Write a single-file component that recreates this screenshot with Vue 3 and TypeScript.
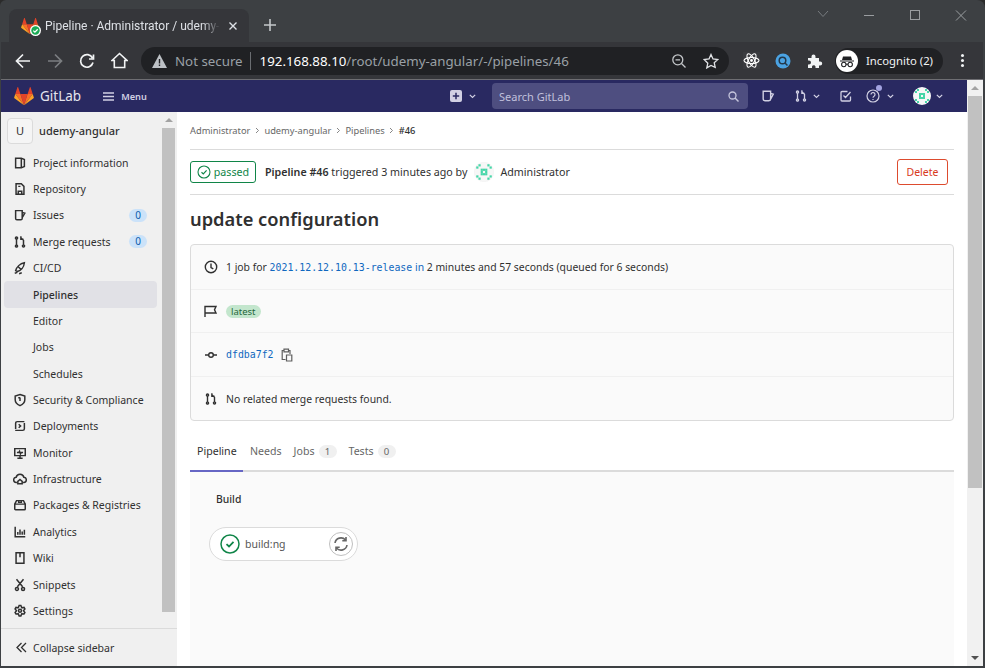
<script setup lang="ts">
interface NavItem {
  label: string
  icon?: string
  count?: number
  active?: boolean
}

const navItems: NavItem[] = [
  { label: 'Project information', icon: 'M3 2.500h6.500l3.500 1.500v8l-3.500 1.500H3zM9.500 2.500v11' },
  { label: 'Repository', icon: 'M3.500 2h6l3 3v9h-9zM6 14v-3.500h4V14M6 5h2.500' },
  { label: 'Issues', icon: 'M3 3h7.500v9a1.500 1.500 0 0 1-1.500 1.500H4.500A1.500 1.500 0 0 1 3 12zM10.500 5l3 1-3 5', count: 0 },
  { label: 'Merge requests', icon: 'M4 5v6M2.800 3.500a1.200 1.200 0 1 0 2.400 0 1.200 1.200 0 1 0-2.400 0M2.800 12.500a1.200 1.200 0 1 0 2.400 0 1.200 1.200 0 1 0-2.400 0M10.800 12.500a1.200 1.200 0 1 0 2.400 0 1.200 1.200 0 1 0-2.400 0M12 11V6L9 3.200M9 1.500v3.400h3', count: 0 },
  { label: 'CI/CD', icon: 'M3 11c1-4 5-8 10-9-.5 5-4 9-8 10zM6 6.500l3.500 3.500M2 14l3-1M7 14.500l3-1' },
  { label: 'Pipelines', active: true },
  { label: 'Editor' },
  { label: 'Jobs' },
  { label: 'Schedules' },
  { label: 'Security & Compliance', icon: 'M8 1.800l5.500 1.700v4.200c0 3-2.400 5.400-5.500 6.800-3.100-1.400-5.500-3.800-5.500-6.800V3.500zM8 5v4M6 5.500h2' },
  { label: 'Deployments', icon: 'M3 11.500V5a2 2 0 0 1 2-2h8M13 4.500V11a2 2 0 0 1-2 2H2.500M6.500 6l2.200 2-2.200 2' },
  { label: 'Monitor', icon: 'M2 3h12v8H2zM5 14h6M8 11v3M4.500 7.500h2l1-1.500 1 3 1-1.500h2' },
  { label: 'Infrastructure', icon: 'M4.500 12H4a3 3 0 0 1-.4-6 4.500 4.500 0 0 1 8.800 0 3 3 0 0 1-.4 6h-.5M8 8.500l2.500 2.200v2.600H5.500v-2.600z' },
  { label: 'Packages & Registries', icon: 'M2 7h12v5.500a1 1 0 0 1-1 1H3a1 1 0 0 1-1-1zM2 7l2-4h8l2 4M6.500 3v2h3V3' },
  { label: 'Analytics', icon: 'M2.500 2v11.500H14M5.500 11V8M8 11V5M10.500 11V7.500M13 11V5.500' },
  { label: 'Wiki', icon: 'M3.500 2h9v12h-9zM8 2v5' },
  { label: 'Snippets', icon: 'M4 1.500l7 8.500M12 1.500L5 10M2.800 12.500a1.700 1.700 0 1 0 3.400 0 1.700 1.700 0 1 0-3.400 0M9.800 12.500a1.700 1.700 0 1 0 3.400 0 1.700 1.700 0 1 0-3.400 0' },
  { label: 'Settings', icon: 'M6 4.300L7 1.800h2l1 2.500 2.600-.4 1 1.700L12 7.700l1.600 2.100-1 1.700-2.600-.4-1 2.500H7l-1-2.500-2.600.4-1-1.700L4 7.700 2.400 5.600l1-1.700zM6.300 7.700a1.700 1.700 0 1 0 3.400 0 1.700 1.700 0 1 0-3.400 0' },
]

const mrIcon = navItems[3].icon
const crumbs = ['Administrator', 'udemy-angular', 'Pipelines']

// identicon cells as rows of on/off, same pattern on every avatar
const identicon = ['.........', '..x...x..', '.x.....x.', '...xxx...', '...x.x...', '...xxx...', '.x.....x.', '..x...x..', '.........']
  .flatMap((row, y) => [...row].map((ch, x) => (ch === 'x' ? [x, y] : null)))
  .filter((c): c is number[] => c !== null)
</script>

<template>
  <div class="window">
    <!-- Browser tab strip -->
    <div class="tabstrip">
      <div class="tab">
        <span class="favicon">
          <svg width="18" height="18" viewBox="0 0 25 24">
            <path d="M12.500 23.500L17 9.600H8z" fill="#e24329" />
            <path d="M12.500 23.500L8 9.600H1.600zM12.500 23.500L17 9.600h6.400z" fill="#fc6d26" />
            <path d="M1.600 9.600L.2 13.800a1 1 0 0 0 .35 1.100L12.500 23.500zM23.400 9.600l1.400 4.200a1 1 0 0 1-.35 1.100L12.500 23.500z" fill="#fca326" />
            <path d="M1.600 9.600H8L5.200 1a.5.5 0 0 0-.9 0zM23.400 9.600H17L19.800 1a.5.5 0 0 1 .9 0z" fill="#e24329" />
          </svg>
          <svg class="favicon-check" width="11" height="11" viewBox="0 0 11 11">
            <circle cx="5.500" cy="5.500" r="5.500" fill="#fff" />
            <circle cx="5.500" cy="5.500" r="4.200" fill="#1aaa55" />
            <path d="M3.300 5.600l1.600 1.500 2.800-2.900" fill="none" stroke="#fff" stroke-width="1.300" />
          </svg>
        </span>
        <span class="tab-title">Pipeline · Administrator / udemy-</span>
        <svg class="tab-close" width="10" height="10" viewBox="0 0 10 10">
          <path d="M1.500 1.500l7 7M8.500 1.500l-7 7" stroke="#dee1e6" stroke-width="1.400" />
        </svg>
      </div>
      <svg class="tab-new" width="14" height="14" viewBox="0 0 14 14">
        <path d="M7 1v12M1 7h12" stroke="#c4c7ca" stroke-width="1.600" />
      </svg>
      <div class="grow"></div>
      <div class="win-controls">
        <svg width="46" height="14" viewBox="0 0 46 14"><path d="M18 3l5 5.500L28 3" fill="none" stroke="#777b7f" /></svg>
        <svg width="46" height="14" viewBox="0 0 46 14"><path d="M18 7.500h10" stroke="#9a9da0" /></svg>
        <svg width="46" height="14" viewBox="0 0 46 14"><rect x="18.500" y="2.500" width="9" height="9" fill="none" stroke="#9a9da0" /></svg>
        <svg width="46" height="14" viewBox="0 0 46 14"><path d="M18 2.500l10 10M28 2.500l-10 10" stroke="#9a9da0" /></svg>
      </div>
    </div>

    <!-- Browser toolbar -->
    <div class="toolbar">
      <div class="tool-btn">
        <svg width="16" height="16" viewBox="0 0 16 16"><path d="M15 8H2M8 1.500L1.500 8 8 14.500" fill="none" stroke="#f1f3f4" stroke-width="1.700" /></svg>
      </div>
      <div class="tool-btn">
        <svg width="16" height="16" viewBox="0 0 16 16"><path d="M1 8h13M8 1.500L14.500 8 8 14.500" fill="none" stroke="#7b7e81" stroke-width="1.700" /></svg>
      </div>
      <div class="tool-btn">
        <svg width="16" height="16" viewBox="0 0 16 16"><path d="M13.500 5A6.300 6.300 0 1 0 14 9.500M14.500 1.500V6H10" fill="none" stroke="#f1f3f4" stroke-width="1.700" /></svg>
      </div>
      <div class="tool-btn">
        <svg width="17" height="17" viewBox="0 0 17 17"><path d="M1 8.500L8.500 1.500l7.500 7h-2.300v7H3.300v-7z" fill="none" stroke="#f1f3f4" stroke-width="1.600" /></svg>
      </div>
      <div class="omnibox">
        <svg width="15" height="14" viewBox="0 0 15 14"><path d="M7.500 0L15 14H0z" fill="#bdc1c6" /><path d="M7.500 5v4.500M7.500 10.500v1.500" stroke="#202124" stroke-width="1.400" /></svg>
        <span class="not-secure">Not secure</span>
        <span class="omni-sep"></span>
        <span class="url"><b>192.168.88.10</b>/root/udemy-angular/-/pipelines/46</span>
        <div class="grow"></div>
        <svg class="omni-icon" width="16" height="16" viewBox="0 0 16 16"><circle cx="6.800" cy="6.800" r="5" fill="none" stroke="#c4c7ca" stroke-width="1.300" /><path d="M4.500 6.800h4.600M10.500 10.500l4 4" stroke="#c4c7ca" stroke-width="1.300" /></svg>
        <svg class="omni-icon star" width="16" height="16" viewBox="0 0 16 16"><path d="M8 1.500l2 4.500 4.800.5-3.600 3.200 1 4.700L8 12.500l-4.200 2.400 1-4.700L1.200 6.500 6 6z" fill="none" stroke="#e0e2e5" stroke-width="1.300" /></svg>
      </div>
      <div class="ext">
        <svg width="17" height="17" viewBox="0 0 17 17">
          <rect width="17" height="17" fill="#3a3b3f" />
          <g fill="none" stroke="#fff" stroke-width="1.100">
            <ellipse cx="8.500" cy="8.500" rx="7.500" ry="3" />
            <ellipse cx="8.500" cy="8.500" rx="7.500" ry="3" transform="rotate(60 8.500 8.500)" />
            <ellipse cx="8.500" cy="8.500" rx="7.500" ry="3" transform="rotate(120 8.500 8.500)" />
          </g>
          <circle cx="8.500" cy="8.500" r="1.400" fill="#fff" />
        </svg>
      </div>
      <div class="ext">
        <svg width="16" height="16" viewBox="0 0 16 16">
          <circle cx="8" cy="8" r="7.500" fill="#4ba3e3" />
          <circle cx="7.500" cy="7.500" r="3.300" fill="none" stroke="#23394c" stroke-width="1.500" />
          <path d="M10 10l2.500 2.500" stroke="#23394c" stroke-width="1.500" />
        </svg>
      </div>
      <div class="ext">
        <svg width="16" height="16" viewBox="0 0 16 16">
          <path d="M1 5h3.500V3.500a2 2 0 0 1 4 0V5H12v3.500h1.200a2 2 0 0 1 0 4H12V15H8.500v-1.400a1.800 1.800 0 0 0-3.500 0V15H1v-3.500h1a2 2 0 0 0 0-4H1z" fill="#f1f3f4" />
        </svg>
      </div>
      <div class="incognito">
        <svg width="22" height="22" viewBox="0 0 22 22">
          <circle cx="11" cy="11" r="11" fill="#fff" />
          <path d="M7 6.500h8l1 3.500H6zM4 10.500h14v1H4z" fill="#202124" />
          <g fill="none" stroke="#202124" stroke-width="1.100"><circle cx="7.800" cy="14.500" r="2.200" /><circle cx="14.200" cy="14.500" r="2.200" /><path d="M10 14.300h2" /></g>
        </svg>
        <span>Incognito (2)</span>
      </div>
      <div class="kebab"><i></i><i></i><i></i></div>
    </div>

    <div class="page">
      <div class="page-body">
        <!-- GitLab top bar -->
        <header class="navbar">
          <svg class="logo" width="20" height="20" viewBox="0 0 25 24">
            <path d="M12.500 23.500L17 9.600H8z" fill="#e24329" />
            <path d="M12.500 23.500L8 9.600H1.600zM12.500 23.500L17 9.600h6.400z" fill="#fc6d26" />
            <path d="M1.600 9.600L.2 13.800a1 1 0 0 0 .35 1.100L12.500 23.500zM23.400 9.600l1.400 4.200a1 1 0 0 1-.35 1.100L12.500 23.500z" fill="#fca326" />
            <path d="M1.600 9.600H8L5.200 1a.5.5 0 0 0-.9 0zM23.400 9.600H17L19.800 1a.5.5 0 0 1 .9 0z" fill="#e24329" />
          </svg>
          <span class="brand">GitLab</span>
          <svg class="burger" width="11" height="9" viewBox="0 0 11 9"><path d="M0 1h11M0 4.500h11M0 8h11" stroke="#d1d0e3" stroke-width="1.300" /></svg>
          <span class="menu">Menu</span>
          <div class="grow"></div>
          <svg width="12" height="12" viewBox="0 0 12 12"><rect width="12" height="12" rx="2" fill="#d1d0e3" /><path d="M6 2.800v6.400M2.800 6h6.400" stroke="#292961" stroke-width="1.500" /></svg>
          <svg class="chev plus-chev" width="7" height="5" viewBox="0 0 7 5"><path d="M.8.800L3.500 3.500 6.200.8" fill="none" stroke="#d1d0e3" stroke-width="1.200" /></svg>
          <div class="search">
            <span>Search GitLab</span>
            <svg width="11" height="11" viewBox="0 0 11 11"><circle cx="4.500" cy="4.500" r="3.500" fill="none" stroke="#c6c6dc" stroke-width="1.300" /><path d="M7 7l3.500 3.500" stroke="#c6c6dc" stroke-width="1.400" /></svg>
          </div>
          <svg class="nav-icon issue-nav" width="14" height="14" viewBox="0 0 16 16"><path d="M2.500 2.500h8.500v9a2 2 0 0 1-2 2H4.500a2 2 0 0 1-2-2zM11 5l3 1-3 5.500" fill="none" stroke="#d1d0e3" stroke-width="1.600" /></svg>
          <svg class="nav-icon mr-nav" width="14" height="14" viewBox="0 0 16 16"><path :d="mrIcon" fill="none" stroke="#d1d0e3" stroke-width="1.500" /></svg>
          <svg class="chev mr-chev" width="7" height="5" viewBox="0 0 7 5"><path d="M.8.800L3.500 3.500 6.200.8" fill="none" stroke="#d1d0e3" stroke-width="1.200" /></svg>
          <svg class="nav-icon todo-nav" width="12" height="12" viewBox="0 0 12 12"><path d="M10.500 6.500V10a1 1 0 0 1-1 1H2a1 1 0 0 1-1-1V2.500a1 1 0 0 1 1-1h5.500M3.500 5.500L5.500 7.500 10.500 2" fill="none" stroke="#d1d0e3" stroke-width="1.300" /></svg>
          <span class="help-wrap">
            <svg width="14" height="14" viewBox="0 0 14 14"><circle cx="7" cy="7" r="6" fill="none" stroke="#d1d0e3" stroke-width="1.200" /><path d="M5 5.500a2 2 0 1 1 3 1.800c-.7.4-1 .8-1 1.500M7 10v1" fill="none" stroke="#d1d0e3" stroke-width="1.200" /></svg>
            <i class="help-dot"></i>
          </span>
          <svg class="chev help-chev" width="7" height="5" viewBox="0 0 7 5"><path d="M.8.800L3.500 3.500 6.200.8" fill="none" stroke="#d1d0e3" stroke-width="1.200" /></svg>
          <svg class="nav-avatar" width="18" height="18" viewBox="0 0 9 9">
            <circle cx="4.500" cy="4.500" r="4.500" fill="#f7f7f7" />
            <rect v-for="c in identicon" :key="c.join()" :x="c[0]" :y="c[1]" width="1" height="1" fill="#45d6a8" />
          </svg>
          <svg class="chev avatar-chev" width="7" height="5" viewBox="0 0 7 5"><path d="M.8.800L3.500 3.500 6.200.8" fill="none" stroke="#d1d0e3" stroke-width="1.200" /></svg>
        </header>

        <div class="layout">
          <!-- Sidebar -->
          <aside class="sidebar">
            <div class="side-top">
              <div class="side-scroll">
                <div class="project">
                  <span class="project-avatar">U</span>
                  <span class="project-name">udemy-angular</span>
                </div>
                <a v-for="item in navItems" :key="item.label" class="nav-item" :class="{ active: item.active }">
                  <span class="nav-ico">
                    <svg v-if="item.icon" width="14" height="14" viewBox="0 0 16 16"><path :d="item.icon" fill="none" stroke="#303030" stroke-width="1.700" /></svg>
                  </span>
                  <span class="nav-label">{{ item.label }}</span>
                  <span v-if="item.count !== undefined" class="nav-count">{{ item.count }}</span>
                </a>
              </div>
              <div class="side-bar">
                <span class="arrow-up"></span>
                <span class="thumb"></span>
              </div>
            </div>
            <div class="collapse">
              <svg width="11" height="11" viewBox="0 0 11 11"><path d="M5.500 1L1 5.500 5.500 10M10 1L5.500 5.500 10 10" fill="none" stroke="#303030" stroke-width="1.300" /></svg>
              <span>Collapse sidebar</span>
            </div>
          </aside>

          <!-- Main content -->
          <main class="content">
            <nav class="breadcrumbs">
              <template v-for="c in crumbs" :key="c">
                <span>{{ c }}</span>
                <svg width="5" height="7" viewBox="0 0 5 7"><path d="M1 1l2.500 2.500L1 6" fill="none" stroke="#868686" /></svg>
              </template>
              <span class="crumb-last">#46</span>
            </nav>

            <div class="pipe-header">
              <span class="ci-badge">
                <svg width="14" height="14" viewBox="0 0 14 14"><circle cx="7" cy="7" r="6" fill="none" stroke="#108548" stroke-width="1.100" /><path d="M4.500 7.200l1.800 1.700 3.300-3.500" fill="none" stroke="#108548" stroke-width="1.200" /></svg>
                passed
              </span>
              <span class="pipe-text"><strong>Pipeline #46</strong> triggered 3 minutes ago by</span>
              <svg class="pipe-avatar" width="20" height="20" viewBox="0 0 9 9">
                <circle cx="4.500" cy="4.500" r="4.400" fill="#f7f7f7" stroke="#ececec" stroke-width=".2" />
                <rect v-for="c in identicon" :key="c.join()" :x="c[0]" :y="c[1]" width="1" height="1" fill="#45d6a8" />
              </svg>
              <span class="pipe-user">Administrator</span>
              <div class="grow"></div>
              <button class="delete-btn">Delete</button>
            </div>

            <h1 class="title">update configuration</h1>

            <section class="info-card">
              <div class="info-row">
                <svg width="14" height="14" viewBox="0 0 14 14"><circle cx="7" cy="7" r="5.700" fill="none" stroke="#303030" stroke-width="1.400" /><path d="M7 3.500V7.500l2.300 1.300" fill="none" stroke="#303030" stroke-width="1.400" /></svg>
                <span>1 job for <a class="mono">2021.12.12.10.13-release</a> <a class="link">in</a> 2 minutes and 57 seconds (queued for 6 seconds)</span>
              </div>
              <div class="info-row">
                <svg width="14" height="14" viewBox="0 0 14 14"><path d="M1 13V2.500h11L10.500 5.800 12 9H1" fill="none" stroke="#303030" stroke-width="1.400" /></svg>
                <span class="tag">latest</span>
              </div>
              <div class="info-row">
                <svg width="14" height="14" viewBox="0 0 14 14"><circle cx="7" cy="7" r="2.300" fill="none" stroke="#303030" stroke-width="1.400" /><path d="M1 7h3.700M9.300 7H13" stroke="#303030" stroke-width="1.400" /></svg>
                <a class="mono">dfdba7f2</a>
                <svg class="copy" width="12" height="14" viewBox="0 0 12 14"><path d="M3 2.500H1.200v9H4.500M7.500 2.500H9V6M3 1.200h4.500v2.600H3zM5.500 7h5.300v6H5.500z" fill="none" stroke="#5e5e5e" stroke-width="1.200" /></svg>
              </div>
              <div class="info-row">
                <svg width="14" height="14" viewBox="0 0 16 16"><path :d="mrIcon" fill="none" stroke="#303030" stroke-width="1.600" /></svg>
                <span>No related merge requests found.</span>
              </div>
            </section>

            <div class="tabs">
              <a class="tab-link selected">Pipeline</a>
              <a class="tab-link needs">Needs</a>
              <a class="tab-link">Jobs<span class="tab-count">1</span></a>
              <a class="tab-link">Tests<span class="tab-count">0</span></a>
            </div>

            <section class="graph">
              <div class="stage-name">Build</div>
              <div class="job-pill">
                <svg width="20" height="20" viewBox="0 0 20 20"><circle cx="10" cy="10" r="9" fill="#fff" stroke="#108548" stroke-width="1.500" /><path d="M6.500 10.200l2.500 2.300 4.500-4.700" fill="none" stroke="#108548" stroke-width="1.800" /></svg>
                <span class="job-name">build:ng</span>
                <span class="retry">
                  <svg width="16" height="16" viewBox="0 0 16 16"><path d="M2 7a6 6 0 0 1 10.500-3M14 9a6 6 0 0 1-10.500 3M13 1v3.700H9.300M3 15v-3.700h3.700" fill="none" stroke="#666" stroke-width="1.600" /></svg>
                </span>
              </div>
            </section>
          </main>
        </div>
      </div>

      <!-- Page scrollbar -->
      <div class="page-bar">
        <span class="arrow-up"></span>
        <span class="page-thumb"></span>
        <div class="grow"></div>
        <span class="arrow-down"></span>
      </div>
    </div>
  </div>
</template>

<style>
html, body {
  margin: 0;
  overflow: hidden;
  background: #2b2b2b;
}
</style>

<style scoped>
.window {
  width: 985px;
  height: 668px;
  display: flex;
  flex-direction: column;
  box-sizing: border-box;
  padding: 0 2px 2px 1px;
  background: #3d4043;
  border-radius: 6px 8px 0 0;
  font-family: "Noto Sans", "Open Sans", sans-serif;
  color: #303030;
  overflow: hidden;
}

.grow {
  flex: 1;
}

/* browser chrome */
.tabstrip {
  height: 42px;
  display: flex;
  align-items: flex-end;
  flex: none;
}

.tab {
  width: 240px;
  height: 33px;
  margin-left: 8px;
  padding: 0 10px 0 12px;
  box-sizing: border-box;
  display: flex;
  align-items: center;
  background: #35363a;
  border-radius: 8px 8px 0 0;
  color: #dee1e6;
  font-family: Roboto, "Noto Sans", sans-serif;
  font-size: 12px;
}

.favicon {
  position: relative;
  width: 18px;
  height: 18px;
  flex: none;
  margin-right: 6px;
}

.favicon-check {
  position: absolute;
  right: -2px;
  bottom: -1px;
}

.tab-title {
  width: 175px;
  white-space: nowrap;
  flex: none;
  -webkit-mask-image: linear-gradient(90deg, #000 90%, transparent);
  mask-image: linear-gradient(90deg, #000 90%, transparent);
}

.tab-close {
  margin-left: 8px;
  flex: none;
}

.tab-new {
  margin: 0 0 10px 14px;
}

.win-controls {
  display: flex;
  align-self: flex-start;
  padding-top: 8px;
  margin-right: -1px;
}

.toolbar {
  height: 37px;
  flex: none;
  display: flex;
  align-items: center;
  background: #35363a;
  padding-left: 6px;
  border-bottom: 1px solid #6e6e72;
}

.tool-btn {
  width: 32px;
  display: flex;
  justify-content: center;
}

.omnibox {
  width: 588px;
  height: 28px;
  margin: 0 6px;
  padding: 0 10px 0 11px;
  box-sizing: border-box;
  display: flex;
  align-items: center;
  background: #202124;
  border-radius: 14px;
  font-size: 13.300px;
}

.not-secure {
  margin-left: 8px;
  color: #9aa0a6;
}

.omni-sep {
  width: 1px;
  height: 18px;
  margin: 0 9px 0 7px;
  background: #6a6d71;
}

.url {
  color: #9aa0a6;
  white-space: nowrap;
}

.url b {
  color: #fff;
  font-weight: 400;
}

.omni-icon.star {
  margin-left: 16px;
}

.ext {
  width: 32px;
  display: flex;
  justify-content: center;
}

.incognito {
  width: 108px;
  height: 26px;
  margin-left: 4px;
  padding-left: 1px;
  box-sizing: border-box;
  display: flex;
  align-items: center;
  gap: 8px;
  border-radius: 13px;
  background: #202124;
  color: #f1f3f4;
  font-size: 11.300px;
  white-space: nowrap;
}

.kebab {
  display: flex;
  flex-direction: column;
  gap: 2px;
  margin-left: 18px;
}

.kebab i {
  width: 3px;
  height: 3px;
  border-radius: 50%;
  background: #f1f3f4;
}

/* page */
.page {
  flex: 1;
  min-height: 0;
  display: flex;
}

.page-body {
  flex: 1;
  min-width: 0;
  display: flex;
  flex-direction: column;
  background: #fff;
}

.page-bar {
  width: 16px;
  flex: none;
  display: flex;
  flex-direction: column;
  align-items: center;
  background: #f1f1f1;
}

.page-thumb {
  width: 14px;
  height: 392px;
  background: #c1c1c1;
}

.arrow-up,
.arrow-down {
  width: 0;
  height: 0;
  flex: none;
  border-left: 4px solid transparent;
  border-right: 4px solid transparent;
}

.arrow-up {
  margin: 6px 0 6px;
  border-bottom: 4px solid #a3a3a3;
}

.arrow-down {
  margin: 6px 0;
  border-top: 4px solid #505050;
}

/* gitlab navbar */
.navbar {
  height: 32px;
  flex: none;
  display: flex;
  align-items: center;
  padding: 0 24px 0 13px;
  box-sizing: border-box;
  background: #292961;
  color: #d1d0e3;
}

.brand {
  margin-left: 6px;
  font-size: 13.500px;
  color: #e4e4ee;
}

.burger {
  margin-left: 22px;
}

.menu {
  margin-left: 7px;
  font-size: 9.200px;
  font-weight: 600;
}

.chev {
  margin-left: 4px;
  flex: none;
}

.plus-chev {
  margin-left: 7px;
}

.mr-chev {
  margin-left: 5px;
}

.help-chev {
  margin-left: 7px;
}

.avatar-chev {
  margin-left: 5px;
}

.search {
  width: 256px;
  height: 26px;
  margin-left: 16px;
  padding: 0 9px 0 7px;
  box-sizing: border-box;
  display: flex;
  align-items: center;
  justify-content: space-between;
  background: #4e4e80;
  border-radius: 4px;
  color: #c0c0dc;
  font-size: 11px;
}

.issue-nav {
  margin-left: 13px;
}

.mr-nav {
  margin-left: 19px;
}

.todo-nav {
  margin-left: 20px;
}

.help-wrap {
  position: relative;
  display: flex;
  margin-left: 14px;
}

.help-dot {
  position: absolute;
  right: -2px;
  top: -4px;
  width: 6px;
  height: 6px;
  border-radius: 50%;
  background: #a3a3e0;
}

.nav-avatar {
  margin-left: 19px;
}

/* sidebar */
.layout {
  flex: 1;
  min-height: 0;
  display: flex;
}

.sidebar {
  width: 176px;
  flex: none;
  display: flex;
  flex-direction: column;
  background: #f0f0f0;
}

.side-top {
  flex: 1;
  min-height: 0;
  display: flex;
}

.side-scroll {
  width: 161px;
  flex: none;
  padding: 6px 5px 0 3px;
  box-sizing: border-box;
}

.side-bar {
  width: 14px;
  flex: none;
  display: flex;
  flex-direction: column;
  align-items: center;
}

.thumb {
  width: 13px;
  height: 484px;
  margin-right: 1px;
  background: #c1c1c1;
}

.project {
  height: 26px;
  display: flex;
  align-items: center;
  margin: 0 0 5.600px 3px;
  gap: 6px;
}

.project-avatar {
  width: 26px;
  height: 26px;
  box-sizing: border-box;
  display: flex;
  align-items: center;
  justify-content: center;
  padding-bottom: 1px;
  border: 1px solid #dbdbdb;
  border-radius: 4px;
  background: #f5f5f5;
  font-size: 11px;
}

.project-name {
  padding-bottom: 2px;
  font-size: 11px;
  font-weight: 500;
}

.nav-item {
  height: 26.360px;
  display: flex;
  align-items: center;
  padding-left: 9px;
  border-radius: 4px;
  font-size: 10.500px;
  box-sizing: border-box;
}

.nav-item.active {
  background: #e1e1e6;
  font-weight: 500;
}

.nav-ico {
  width: 14px;
  height: 14px;
  flex: none;
  margin-right: 6px;
  display: flex;
}

.nav-label {
  flex: 1;
  white-space: nowrap;
}

.nav-count {
  width: 18px;
  height: 13px;
  margin-right: 10px;
  border-radius: 7px;
  background: #cbe2f9;
  color: #0b5cad;
  font-size: 10px;
  line-height: 13px;
  text-align: center;
}

.collapse {
  height: 37px;
  flex: none;
  display: flex;
  align-items: center;
  gap: 6px;
  padding-left: 15px;
  border-top: 1px solid #dbdbdb;
  font-size: 10.500px;
}

/* main */
.content {
  flex: 1;
  min-width: 0;
  display: flex;
  flex-direction: column;
  padding: 0 13px;
  background: #fff;
}

.breadcrumbs {
  height: 37px;
  flex: none;
  display: flex;
  align-items: center;
  gap: 4.500px;
  border-bottom: 1px solid #dbdbdb;
  font-size: 9.300px;
  color: #666;
}

.crumb-last {
  color: #303030;
  font-weight: 500;
}

.pipe-header {
  height: 44px;
  flex: none;
  display: flex;
  align-items: center;
  border-bottom: 1px solid #dbdbdb;
  font-size: 10.700px;
}

.ci-badge {
  width: 66px;
  height: 22px;
  box-sizing: border-box;
  display: flex;
  align-items: center;
  justify-content: center;
  gap: 3px;
  border: 1px solid #108548;
  border-radius: 3px;
  color: #108548;
}

.pipe-text {
  margin-left: 9px;
}

.pipe-text strong {
  font-weight: 600;
}

.pipe-avatar {
  margin-left: 7px;
}

.pipe-user {
  margin-left: 6px;
}

.delete-btn {
  width: 51px;
  height: 26px;
  margin-right: 6px;
  padding: 0;
  border: 1px solid #dd4b2e;
  border-radius: 3px;
  background: #fff;
  color: #d83a1c;
  font: inherit;
  font-size: 10.500px;
}

.title {
  height: 49px;
  margin: 0;
  flex: none;
  font-size: 18.300px;
  font-weight: 600;
  line-height: 47px;
}

.info-card {
  height: 177px;
  flex: none;
  box-sizing: border-box;
  display: grid;
  grid-template-rows: 45px 43px 44px 43px;
  background: #fafafa;
  border: 1px solid #dbdbdb;
  border-radius: 4px;
  font-size: 10.400px;
}

.info-row {
  display: flex;
  align-items: center;
  gap: 8px;
  padding-left: 13px;
  border-bottom: 1px solid #f0f0f0;
}

.info-row:last-child {
  border-bottom: none;
}

.mono {
  font-family: "DejaVu Sans Mono", "Liberation Mono", monospace;
  font-size: 9.900px;
  color: #1068bf;
}

.link {
  color: #1068bf;
}

.tag {
  padding: 0 5px;
  height: 13px;
  border-radius: 7px;
  background: #c3e6cd;
  color: #24663b;
  font-size: 9.500px;
  line-height: 13px;
}

.copy {
  margin-left: -1px;
}

.tabs {
  height: 51px;
  flex: none;
  box-sizing: border-box;
  display: flex;
  align-items: flex-end;
  border-bottom: 2px solid #dbdbdb;
  font-size: 10.600px;
  color: #666;
}

.tab-link {
  display: flex;
  align-items: center;
  height: 30px;
  margin-bottom: -2px;
  padding: 0 6px 12px;
  box-sizing: border-box;
}

.tab-link.selected {
  width: 53px;
  padding: 0 0 10px 7px;
  color: #303030;
  border-bottom: 2px solid #6666c4;
}

.tab-link.needs {
  margin-left: 1px;
}

.tab-count {
  width: 18px;
  height: 13px;
  margin-left: 4px;
  border-radius: 7px;
  background: #f0f0f0;
  font-size: 9.600px;
  line-height: 13px;
  text-align: center;
}

.graph {
  flex: 1;
  min-height: 0;
  background: #fafafa;
  padding: 20px 0 0 19px;
}

.stage-name {
  margin-left: 7px;
  font-size: 10.400px;
  font-weight: 500;
}

.job-pill {
  width: 149px;
  height: 34px;
  margin-top: 21px;
  box-sizing: border-box;
  display: flex;
  align-items: center;
  padding: 0 4px 0 10px;
  background: #fff;
  border: 1px solid #dbdbdb;
  border-radius: 17px;
}

.job-name {
  flex: 1;
  margin-left: 5px;
  font-size: 10.500px;
  color: #555;
}

.retry {
  width: 24px;
  height: 24px;
  box-sizing: border-box;
  display: flex;
  align-items: center;
  justify-content: center;
  border: 1px solid #bfbfbf;
  border-radius: 50%;
}
</style>
